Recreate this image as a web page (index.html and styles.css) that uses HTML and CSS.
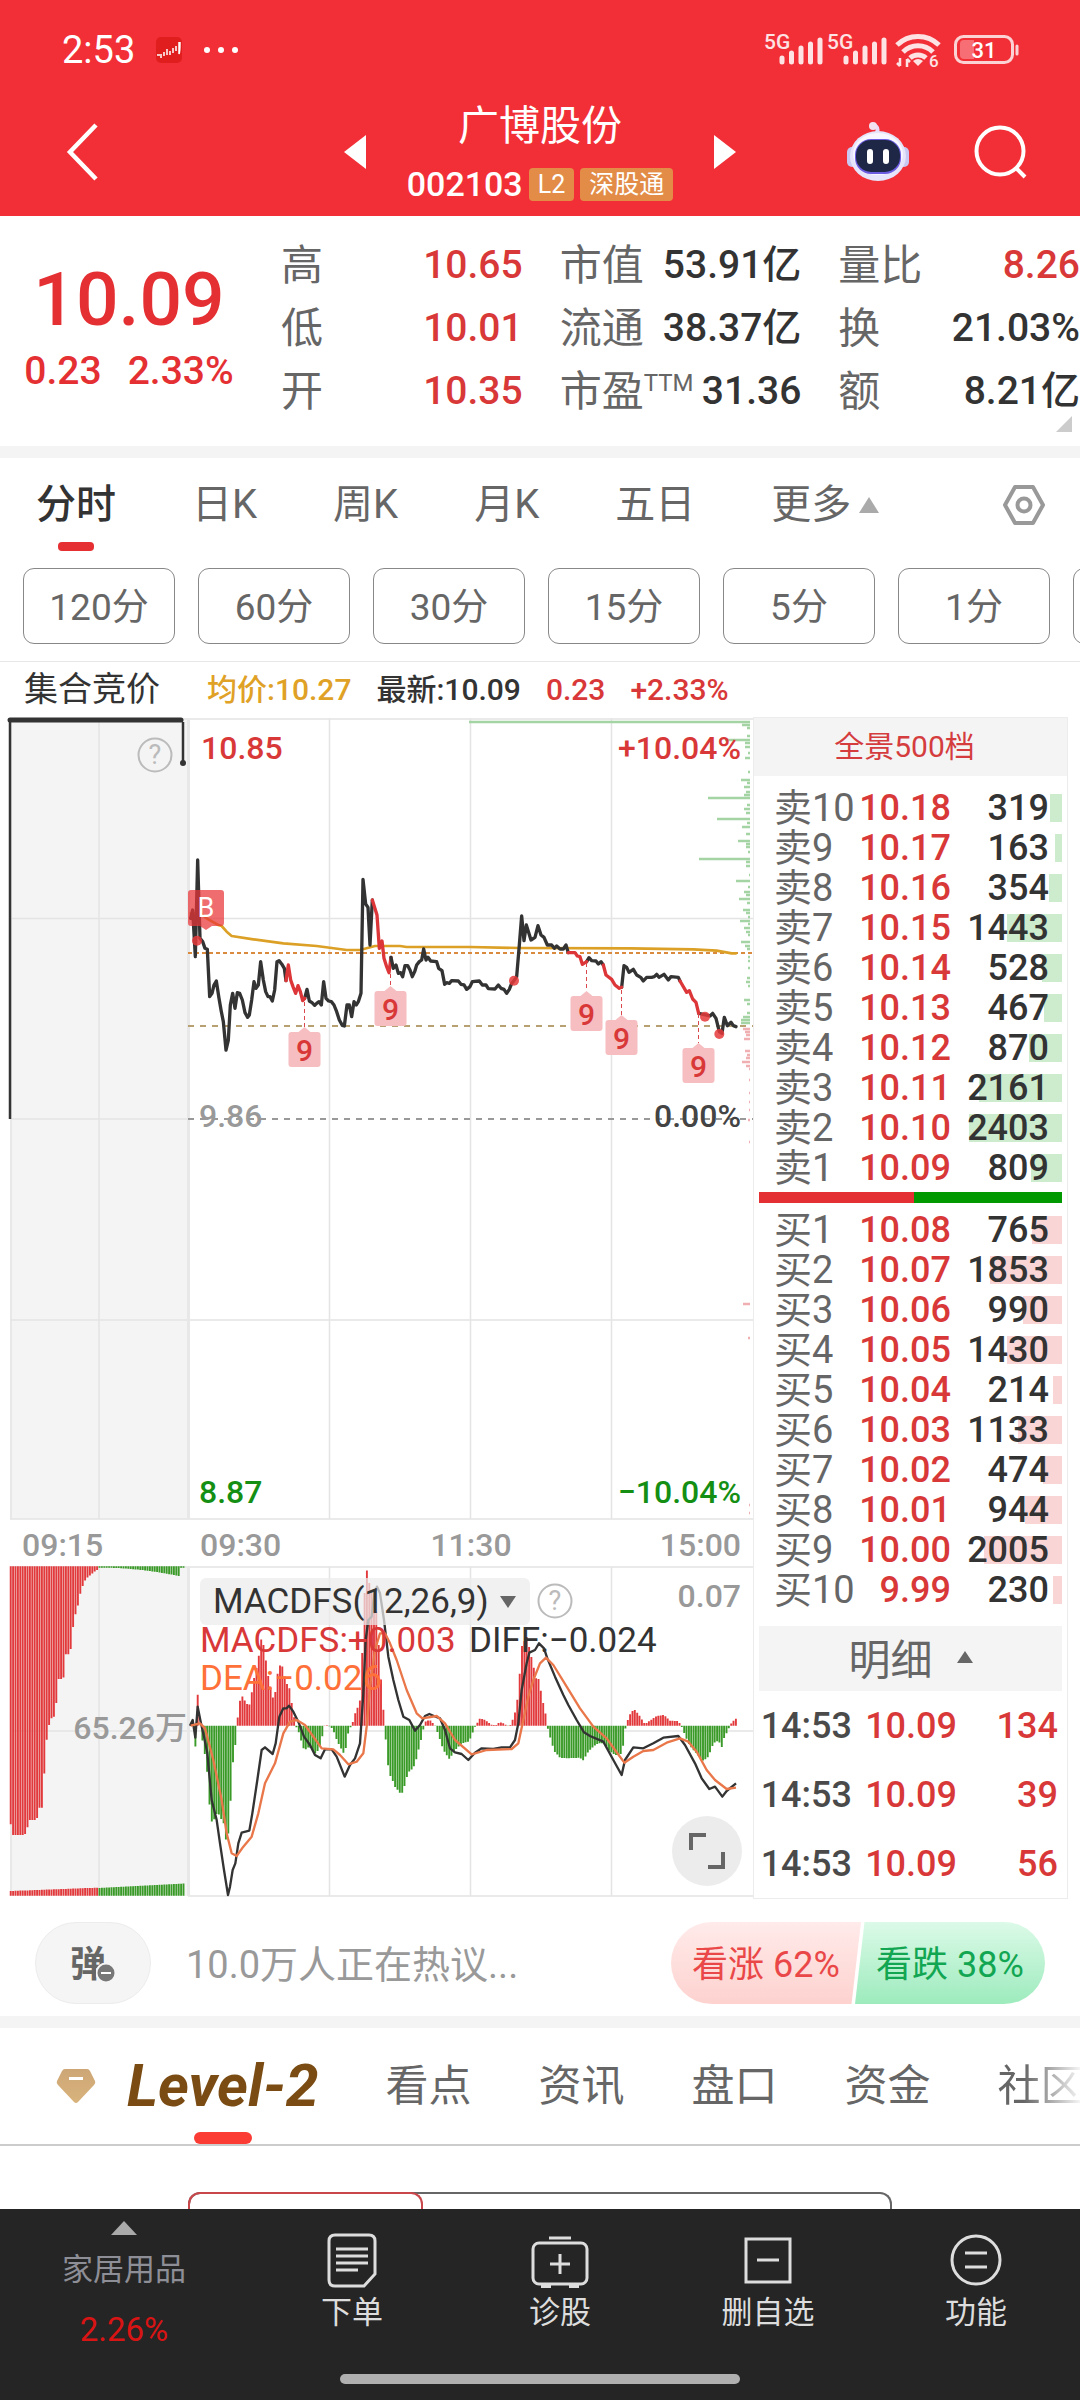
FILE: index.html
```html
<!DOCTYPE html>
<html lang="zh-CN">
<head>
    <title>广博股份 002103</title>

    <meta charset="utf-8"/>
    <meta name="viewport" content="width=device-width, initial-scale=1"/>

    <link rel="stylesheet" href="styles.css">
    <script src="chart.js" defer></script>
</head>
<body>

<header class="top">
    <div class="status">
        <span class="clock num">2:53</span>
        <svg class="app-dot" width="26" height="26" viewBox="0 0 26 26">
            <rect width="26" height="26" rx="5" fill="#e01e1e"/>
            <path d="M1 18h3M5 17v4M8 15v4M11 18v-6M14 14v4M17 16v-5M20 14V9M23 5v12q1-2 1-12" fill="none" stroke="#fff" stroke-width="1.500"/>
        </svg>
        <svg width="36" height="8" viewBox="0 0 36 8" fill="#fff">
            <circle cx="4" cy="4" r="3"/><circle cx="18" cy="4" r="3"/><circle cx="32" cy="4" r="3"/>
        </svg>
        <div class="status-right">
            <svg width="260" height="48" viewBox="760 26 260 48">
                <g fill="#fde3e4">
                    <text class="num" x="764" y="49" font-size="21">5G</text>
                    <text class="num" x="827" y="49" font-size="21">5G</text>
                </g>
                <path d="M782 62v-4M791.500 62v-9M801 62v-14M810.500 62v-18M820 62v-22M846 62v-4M855.500 62v-9M865 62v-14M874.500 62v-18M884 62v-22" stroke="#fde3e4" stroke-width="5" stroke-linecap="round"/>
                <g fill="none" stroke="#fde3e4" stroke-width="5">
                    <path d="M897 45a30 30 0 0 1 42 0"/>
                    <path d="M903 52a21 21 0 0 1 30 0"/>
                    <path d="M910 58a12 12 0 0 1 16 0"/>
                </g>
                <path d="M918 66l-5-5q5-4 10 0z" fill="#fde3e4"/>
                <path d="M900 58v8M900 66l-3-3M907 67v-8M907 59l3 3" stroke="#fde3e4" stroke-width="2.500" fill="none"/>
                <text class="num" x="929" y="67" font-size="17" fill="#fde3e4">6</text>
                <rect x="955.500" y="36.500" width="57" height="26" rx="8" fill="none" stroke="#fbd3d5" stroke-width="3"/>
                <path d="M960 44q0-4 4-4h10v19h-10q-4 0-4-4z" fill="#f76f74"/>
                <path d="M1017 46v8" stroke="#fbd3d5" stroke-width="3" stroke-linecap="round"/>
                <text class="num" x="984" y="58" font-size="22" fill="#fff" text-anchor="middle">31</text>
            </svg>
        </div>
    </div>

    <div class="titlebar">
        <button class="icon-btn back" aria-label="返回">
            <svg width="34" height="60" viewBox="0 0 34 60"><path d="M30 3L4 30l26 27" fill="none" stroke="#fff" stroke-width="4.500"/></svg>
        </button>
        <div class="stock">
            <button class="icon-btn" aria-label="上一只">
                <svg width="22" height="34" viewBox="0 0 22 34"><path d="M22 0v34L0 17z" fill="#fff"/></svg>
            </button>
            <div class="stock-name">
                <h1>广博股份</h1>
                <div class="stock-code">
                    <span class="num">002103</span>
                    <span class="tag">L2</span>
                    <span class="tag">深股通</span>
                </div>
            </div>
            <button class="icon-btn" aria-label="下一只">
                <svg width="22" height="34" viewBox="0 0 22 34"><path d="M0 0v34L22 17z" fill="#fff"/></svg>
            </button>
        </div>
        <div class="top-tools">
            <button class="icon-btn" aria-label="智能助手">
                <svg width="64" height="62" viewBox="0 0 64 62">
                    <path d="M31 12q2-6-3-8" fill="none" stroke="#e8dcf6" stroke-width="4"/>
                    <circle cx="27" cy="5" r="4" fill="#f3e3f0"/>
                    <rect x="1" y="26" width="10" height="20" rx="5" fill="#c9c8f2"/>
                    <rect x="53" y="26" width="10" height="20" rx="5" fill="#c9c8f2"/>
                    <ellipse cx="32" cy="35" rx="28" ry="25" fill="#e6e4fb"/>
                    <ellipse cx="32" cy="33" rx="25" ry="21" fill="#f8f7ff"/>
                    <rect x="9" y="18" width="46" height="35" rx="16" fill="#6a5be0"/>
                    <rect x="10" y="19" width="44" height="32" rx="15" fill="#1e2846"/>
                    <path d="M24 31v9M40 31v9" stroke="#fff" stroke-width="6" stroke-linecap="round"/>
                </svg>
            </button>
            <button class="icon-btn" aria-label="搜索">
                <svg width="54" height="54" viewBox="0 0 54 54"><g fill="none" stroke="#fff" stroke-width="4"><circle cx="26" cy="26" r="23.500"/><path d="M42 43l9 9"/></g></svg>
            </button>
        </div>
    </div>
</header>

<section class="quote">
    <div class="last">
        <strong class="last-price num">10.09</strong>
        <span class="last-change num"><span>0.23</span><span>2.33%</span></span>
    </div>
    <dl class="facts">
        <div><dt>高</dt><dd class="num up">10.65</dd></div>
        <div><dt>低</dt><dd class="num up">10.01</dd></div>
        <div><dt>开</dt><dd class="num up">10.35</dd></div>
    </dl>
    <dl class="facts">
        <div><dt>市值</dt><dd class="num">53.91亿</dd></div>
        <div><dt>流通</dt><dd class="num">38.37亿</dd></div>
        <div><dt>市盈<sup>TTM</sup></dt><dd class="num">31.36</dd></div>
    </dl>
    <dl class="facts">
        <div><dt>量比</dt><dd class="num up">8.26</dd></div>
        <div><dt>换</dt><dd class="num">21.03%</dd></div>
        <div><dt>额</dt><dd class="num">8.21亿</dd></div>
    </dl>
    <svg class="corner" width="16" height="16" viewBox="0 0 16 16"><path d="M16 0v16H0z" fill="#ccc"/></svg>
</section>

<nav class="periods">
    <a class="period active" href="#">分时</a>
    <a class="period" href="#">日K</a>
    <a class="period" href="#">周K</a>
    <a class="period" href="#">月K</a>
    <a class="period" href="#">五日</a>
    <a class="period more" href="#">更多<svg width="20" height="16" viewBox="0 0 20 16"><path d="M10 0l10 16H0z" fill="#aaa"/></svg></a>
    <button class="icon-btn settings" aria-label="设置">
        <svg width="42" height="42" viewBox="0 0 42 42"><g fill="none" stroke="#999" stroke-width="4"><path d="M12 3h18l10 18-10 18H12L2 21z" stroke-linejoin="round"/><circle cx="21" cy="21" r="6.500"/></g></svg>
    </button>
</nav>

<div class="minutes">
    <button>120分</button>
    <button>60分</button>
    <button>30分</button>
    <button>15分</button>
    <button>5分</button>
    <button>1分</button>
    <button aria-label="更多周期"></button>
</div>

<div class="summary">
    <span class="auction">集合竞价</span>
    <span class="avg num">均价:10.27</span>
    <span class="num">最新:10.09</span>
    <span class="num up">0.23</span>
    <span class="num up">+2.33%</span>
</div>

<main class="board">
    <div class="chart">
        <svg class="chart-svg" viewBox="0 717 753 1183">
            <!-- grid -->
            <path d="M10 718h178v801H10zM10 1567h178v329H10z" fill="#f4f4f4"/>
            <path d="M10 719H753M10 918.500H753M10 1119H188M10 1320H753M10 1519H753M10 1567H753M10 1731H753M188 1896H753M11 718V1519M99 718V1519M99 1567V1896M11 1567V1896M329.500 718V1519M470.500 718V1519M611.500 718V1519M329.500 1567V1896M470.500 1567V1896M611.500 1567V1896" class="grid"/>
            <path d="M188.500 718V1519M188.500 1567V1896" stroke="#e8e8e8" stroke-width="3"/>
            <path d="M188 1119H753" stroke="#999" stroke-width="2" stroke-dasharray="6 6"/>
            <path d="M188 953H753" stroke="#d98a3c" stroke-width="2" stroke-dasharray="4 3"/>
            <path d="M188 1026H753" stroke="#b7a173" stroke-width="2" stroke-dasharray="6 6"/>

            <!-- call auction -->
            <path d="M10 1119V720H181M183 722V762" class="price-line" stroke-width="2.500"/>
            <path d="M10 720H181" stroke="#333" stroke-width="5" stroke-linecap="round"/>
            <circle cx="183" cy="763" r="3" fill="#333"/>
            <g class="help"><circle cx="155" cy="755" r="16.500"/><text class="num" x="155" y="764">?</text></g>

            <!-- volume by price, filled by chart.js -->
            <path id="profile-up" stroke="#a4d3a4" stroke-width="2.500"/>
            <path id="profile-down" stroke="#f0b0b2" stroke-width="2.500"/>

            <!-- price and average, three units to the pixel -->
            <g transform="translate(0 700) scale(.33333)" fill="none" stroke-linejoin="round" stroke-linecap="round">
                <path class="avg-line" d="M572 640L600 640 625 658 655 675 665 678 680 695 695 708 760 718 850 730 950 738 1040 750 1080 750 1125 738 1200 738 1220 741 1410 741 1560 744 1890 745 2080 748 2150 752 2195 760 2208 760"/>
                <path class="price-line" d="M572 655L578 630 586 770 593 480 600 715 608 725 615 745 622 748 629 890 636 880 642 855 649 843 657 895 664 935 670 965 678 1050 685 1020 691 915 698 880 705 925 712 878 719 880 727 900 735 938 743 952 748 945 755 900 762 845 768 865 775 855 782 785 790 840 797 875 804 890 810 890 817 903 824 870 831 785 837 782 845 792 853 805 858 842M914 895L921 868 928 903 936 908 944 916 950 910 957 905 964 915 971 845 978 895 986 903 994 905 1002 915 1010 935 1018 960 1027 976 1033 978 1041 915 1048 915 1055 950 1062 905 1069 915 1075 905 1083 880 1089 538 1097 612 1104 622 1110 735 1117 600"/>
                <path class="price-line red" d="M858 842L865 795 872 840 879 860 887 880 894 857 901 875 908 902 914 895M1117 600L1131 645 1138 745 1146 723 1152 775 1160 800 1167 818 1173 772"/>
                <g transform="translate(1020 0)">
                    <path class="price-line" d="M153 772L160 805 168 795 175 820 182 818 188 830 195 797 203 797 210 810 217 830 224 815 230 795 238 785 245 780 251 747 258 780 264 772 272 783 290 785 296 805 306 812 314 853 320 848 328 850 335 842 355 843 363 853 372 855 380 868 390 860 397 845 418 843 427 855 438 855 445 866 465 867 475 855 483 865 492 868 500 880 508 868 515 850 522 842 530 830 538 735 545 648 552 722 559 675 573 720 585 712 594 677 603 705 612 712 622 735 635 735 643 745 650 738 660 747 670 747 678 735 685 758M740 785L747 773 755 782 768 783 775 792 783 785 790 795M845 862L852 797 860 802 867 817 880 808 890 825 902 832 910 843 920 832 935 832 943 830 950 823 957 832 972 823 985 840 993 830 1015 832 1020 843M1076 940L1110 948 1118 940 1128 955 1138 995 1146 1000 1153 952 1162 977 1173 967 1180 977 1188 980"/>
                    <path class="price-line red" d="M685 758L705 758 712 768 720 770 727 793 740 785M790 795L798 825 815 838 825 855 838 865 845 862M1020 843L1040 877 1048 872 1058 897 1068 907 1076 940"/>
                </g>
                <g fill="#e53a3c" fill-opacity=".85">
                    <circle cx="591" cy="722" r="15"/><circle cx="1542" cy="842" r="15"/><circle cx="2115" cy="950" r="15"/><circle cx="2158" cy="1002" r="15"/>
                </g>
            </g>

            <!-- buy mark -->
            <path d="M191 890h30q3 0 3 3v30q0 3-3 3h-9l-6 4-6-4h-9q-3 0-3-3v-30q0-3 3-3z" fill="#e93538" fill-opacity=".72"/>
            <text x="206" y="917" font-size="27" fill="#fff" text-anchor="middle">B</text>

            <!-- nine-turn marks -->
            <path d="M304.500 1002v25M390.500 974v12M586.500 963v28M621.500 990v25M698.500 1014v29" stroke="#d9484c" stroke-dasharray="4 3" stroke-width="1"/>
            <g id="nines"></g>

            <!-- price axis -->
            <g class="axis num">
                <text x="201" y="759" class="up">10.85</text>
                <text x="741" y="759" class="up end">+10.04%</text>
                <text x="199" y="1127" fill="#999">9.86</text>
                <text x="741" y="1127" fill="#444" class="end">0.00%</text>
                <text x="199" y="1503" class="down">8.87</text>
                <text x="741" y="1503" class="down end">−10.04%</text>
                <g fill="#999">
                    <text x="22" y="1556">09:15</text>
                    <text x="200" y="1556">09:30</text>
                    <text x="471" y="1556" class="mid">11:30</text>
                    <text x="741" y="1556" class="end">15:00</text>
                    <text x="741" y="1607" class="end">0.07</text>
                    <text x="187" y="1739" class="end">65.26万</text>
                </g>
            </g>

            <!-- auction volume and MACD columns, filled by chart.js -->
            <path id="col-red" stroke="#e2393c" stroke-width="1.900"/>
            <path id="col-green" stroke="#3a9a28" stroke-width="1.900"/>

            <g transform="translate(0 1460) scale(.33333)" fill="none" stroke-linejoin="round" stroke-width="7">
                <path stroke="#333" d="M570 797L578 780 586 833 593 740 602 785 612 830 622 880 635 1020 650 1080 660 1150 672 1230 684 1305 690 1280 698 1230 706 1210 715 1150 725 1118 748 1112 757 1060 772 960 785 870 795 862 818 882 827 850 838 770 850 745 860 745 867 737 880 755 897 790 912 830 930 855 945 885 962 895 975 868 995 868 1010 890 1034 950 1050 915 1065 895 1080 850 1090 700 1097 540 1105 480 1115 470 1123 400 1131 380 1140 400 1152 480 1165 590 1180 660 1195 720 1210 770 1228 780 1245 812 1260 795 1275 768 1288 762 1302 768 1320 775 1335 810 1350 865 1365 877 1385 882 1405 900 1425 878 1445 865 1480 867 1505 862 1530 862 1545 840 1555 790 1565 690 1580 610 1588 578 1605 570 1617 550 1632 565 1642 595 1665 650 1690 705 1705 735 1730 780 1752 817 1770 828 1810 845 1840 900 1865 945 1875 900 1900 862 1930 865 1960 850 1990 833 2035 828 2055 855 2085 910 2105 955 2128 987 2145 980 2167 1010 2180 993 2208 970"/>
                <path stroke="#e9774a" d="M572 797L600 790 615 805 640 900 665 1020 680 1120 695 1180 710 1188 730 1160 755 1130 775 1060 795 970 825 910 850 820 870 785 890 780 915 795 965 865 1000 868 1020 885 1045 913 1070 905 1090 880 1100 800 1110 680 1125 570 1140 520 1155 520 1170 550 1190 600 1220 690 1250 760 1267 775 1310 768 1335 790 1365 840 1415 883 1460 870 1535 867 1555 850 1570 780 1585 710 1600 660 1620 610 1638 593 1660 615 1700 680 1740 745 1780 800 1820 835 1845 870 1873 908 1900 890 1930 873 1960 870 2000 848 2040 835 2065 845 2090 875 2120 930 2145 960 2180 987 2208 983"/>
            </g>
            <g class="macd">
                <text x="200" y="1652" class="up">MACDFS:+0.003</text>
                <text x="469" y="1652" fill="#333">DIFF:−0.024</text>
                <text x="200" y="1690" fill="#ff7139">DEA:−0.026</text>
            </g>
            <g class="help"><circle cx="555" cy="1601" r="16.500"/><text class="num" x="555" y="1610">?</text></g>
        </svg>
        <button class="indicator">MACDFS(12,26,9)<svg width="16" height="12" viewBox="0 0 16 12"><path d="M0 0h16L8 12z" fill="#666"/></svg></button>
        <button class="expand" aria-label="全屏">
            <svg width="38" height="38" viewBox="0 0 38 38"><path d="M3 18V3h15M35 20v15H20" fill="none" stroke="#666" stroke-width="4"/></svg>
        </button>
    </div>

    <aside class="book">
        <a class="book-head" href="#">全景500档</a>
        <table class="levels sell">
            <tr><th>卖10</th><td>10.18</td><td><i style="width:11%"></i><b>319</b></td></tr>
            <tr><th>卖9</th><td>10.17</td><td><i style="width:6%"></i><b>163</b></td></tr>
            <tr><th>卖8</th><td>10.16</td><td><i style="width:12%"></i><b>354</b></td></tr>
            <tr><th>卖7</th><td>10.15</td><td><i style="width:50%"></i><b>1443</b></td></tr>
            <tr><th>卖6</th><td>10.14</td><td><i style="width:18%"></i><b>528</b></td></tr>
            <tr><th>卖5</th><td>10.13</td><td><i style="width:16%"></i><b>467</b></td></tr>
            <tr><th>卖4</th><td>10.12</td><td><i style="width:30%"></i><b>870</b></td></tr>
            <tr><th>卖3</th><td>10.11</td><td><i style="width:75%"></i><b>2161</b></td></tr>
            <tr><th>卖2</th><td>10.10</td><td><i style="width:84%"></i><b>2403</b></td></tr>
            <tr><th>卖1</th><td>10.09</td><td><i style="width:28%"></i><b>809</b></td></tr>
        </table>
        <div class="ratio"><span style="width:51%"></span></div>
        <table class="levels buy">
            <tr><th>买1</th><td>10.08</td><td><i style="width:27%"></i><b>765</b></td></tr>
            <tr><th>买2</th><td>10.07</td><td><i style="width:65%"></i><b>1853</b></td></tr>
            <tr><th>买3</th><td>10.06</td><td><i style="width:35%"></i><b>990</b></td></tr>
            <tr><th>买4</th><td>10.05</td><td><i style="width:50%"></i><b>1430</b></td></tr>
            <tr><th>买5</th><td>10.04</td><td><i style="width:8%"></i><b>214</b></td></tr>
            <tr><th>买6</th><td>10.03</td><td><i style="width:40%"></i><b>1133</b></td></tr>
            <tr><th>买7</th><td>10.02</td><td><i style="width:17%"></i><b>474</b></td></tr>
            <tr><th>买8</th><td>10.01</td><td><i style="width:33%"></i><b>944</b></td></tr>
            <tr><th>买9</th><td>10.00</td><td><i style="width:70%"></i><b>2005</b></td></tr>
            <tr><th>买10</th><td>9.99</td><td><i style="width:8%"></i><b>230</b></td></tr>
        </table>
        <button class="ticks-head">明细<svg width="16" height="12" viewBox="0 0 16 12"><path d="M0 12h16L8 0z" fill="#666"/></svg></button>
        <table class="ticks">
            <tr><th>14:53</th><td>10.09</td><td>134</td></tr>
            <tr><th>14:53</th><td>10.09</td><td>39</td></tr>
            <tr><th>14:53</th><td>10.09</td><td>56</td></tr>
        </table>
    </aside>
</main>

<section class="talk">
    <button class="danmu" aria-label="弹幕">弹<svg width="20" height="20" viewBox="0 0 20 20"><circle cx="10" cy="10" r="9.500" fill="#777" stroke="#f5f5f5" stroke-width="2"/><path d="M5 10h10" stroke="#fff" stroke-width="2"/></svg></button>
    <a class="talk-text" href="#">10.0万人正在热议...</a>
    <div class="vote">
        <button class="vote-up">看涨 62%</button>
        <button class="vote-down">看跌 38%</button>
    </div>
</section>

<nav class="sections">
    <a class="level2" href="#">
        <svg width="40" height="36" viewBox="0 0 40 36">
            <defs><linearGradient id="gem" x2="0" y2="1"><stop stop-color="#cda676"/><stop offset="1" stop-color="#d9b37c"/></linearGradient></defs>
            <path d="M9 1h22q2 0 3 2l5 10q1 2-1 4L22 34q-2 2-4 0L2 17q-2-2-1-4L6 3q1-2 3-2z" fill="url(#gem)"/>
            <path d="M13 10.500h14" stroke="#fff" stroke-width="3"/>
        </svg>
        <span>Level-2</span>
    </a>
    <a href="#">看点</a>
    <a href="#">资讯</a>
    <a href="#">盘口</a>
    <a href="#">资金</a>
    <a href="#">社区</a>
</nav>

<section class="panel">
    <div class="switch"><button class="switch-on" aria-label="Level-2"></button></div>
</section>

<footer class="bottom">
    <div class="actions">
        <a class="sector" href="#">
            <svg width="26" height="14" viewBox="0 0 26 14"><path d="M0 14h26L13 0z" fill="#aaa"/></svg>
            <span>家居用品</span>
            <span class="sector-change">2.26%</span>
        </a>
        <button class="action">
            <svg width="60" height="60" viewBox="0 0 60 60" fill="none" stroke="#ddd" stroke-width="3"><path d="M13 5h34q6 0 6 6v33L42 56H13q-6 0-6-6V11q0-6 6-6z"/><path d="M14 19h32M14 26h32M14 33h32M14 40h22"/></svg>
            下单
        </button>
        <button class="action">
            <svg width="60" height="60" viewBox="0 0 60 60" fill="none" stroke="#ddd" stroke-width="3"><rect x="3" y="13" width="54" height="41" rx="6"/><path d="M19 8h22M30 24v20M20 34h20"/><path d="M11 56h10M39 56h10" stroke-width="4"/></svg>
            诊股
        </button>
        <button class="action">
            <svg width="60" height="60" viewBox="0 0 60 60" fill="none" stroke="#ddd" stroke-width="3"><rect x="8" y="9" width="44" height="43"/><path d="M19 30h22"/></svg>
            删自选
        </button>
        <button class="action">
            <svg width="60" height="60" viewBox="0 0 60 60" fill="none" stroke="#ddd" stroke-width="3"><circle cx="30" cy="30" r="24"/><path d="M19 23h22M19 37h22"/></svg>
            功能
        </button>
    </div>
    <div class="home-bar"></div>
</footer>

</body>
</html>
```
FILE: styles.css
```css
* {
    box-sizing: border-box;
}

body {
    margin: 0;
    min-height: 100vh;
    display: flex;
    flex-direction: column;
    background: #fff;
    color: #333;
    font-family: Roboto, "Noto Sans CJK SC", sans-serif;
    overflow-x: hidden;
}

button {
    margin: 0;
    padding: 0;
    border: 0;
    background: none;
    color: inherit;
    font: inherit;
    cursor: pointer;
}

a {
    color: inherit;
    text-decoration: none;
}

svg {
    display: block;
}

h1, dl, dd {
    margin: 0;
}

.num {
    font-weight: 500;
}

.up {
    color: #d93838;
    fill: #d93838;
}

.down {
    fill: #148f14;
}

.icon-btn {
    display: flex;
}

/* header */
.top {
    background: #f22f37;
    color: #fff;
}

.status {
    display: flex;
    align-items: center;
    gap: 21px;
    height: 92px;
    padding: 8px 60px 0 62px;
}

.clock {
    font-size: 38px;
    font-weight: 400;
    line-height: 40px;
}

.status-right {
    margin-left: auto;
}

.titlebar {
    display: grid;
    grid-template-columns: 1fr auto 1fr;
    align-items: center;
    height: 124px;
    padding: 0 52px 4px 66px;
}

.stock {
    display: flex;
    align-items: center;
    justify-content: space-between;
    width: 392px;
    margin-right: 14px;
}

.stock-name {
    padding-top: 4px;
    text-align: center;
}

.stock-name h1 {
    font-size: 41px;
    font-weight: 400;
    line-height: 60px;
}

.stock-code {
    display: flex;
    align-items: center;
    gap: 6px;
    height: 56px;
    font-size: 34px;
}

.tag {
    padding: 0 9px;
    border-radius: 4px;
    background: #e28c48;
    font-size: 25px;
    line-height: 33px;
}

.top-tools {
    display: flex;
    align-items: center;
    justify-content: flex-end;
    gap: 64px;
}

/* quote */
.quote {
    position: relative;
    display: grid;
    grid-template-columns: 244px repeat(3, 1fr);
    gap: 37px;
    height: 242px;
    padding-top: 18px;
    border-bottom: 12px solid #f4f4f4;
}

.last {
    display: flex;
    flex-direction: column;
    align-items: center;
    padding: 18px 0 0 14px;
    color: #e53033;
}

.last-price {
    font-size: 75px;
    line-height: 94px;
}

.last-change {
    display: flex;
    gap: 26px;
    font-size: 39px;
    line-height: 50px;
}

.facts div {
    display: flex;
    justify-content: space-between;
    height: 63px;
    line-height: 63px;
    font-size: 42px;
    white-space: nowrap;
}

.facts dt {
    color: #666;
}

.facts sup {
    font-size: 24px;
    line-height: 24px;
}

.facts dd {
    font-size: 39px;
}

.corner {
    position: absolute;
    right: 8px;
    bottom: 14px;
}

/* period tabs */
.periods {
    display: flex;
    align-items: center;
    gap: 76px;
    height: 110px;
    padding: 0 35px 16px 36px;
    font-size: 40px;
    line-height: 60px;
    color: #666;
}

.period {
    position: relative;
    white-space: nowrap;
}

.period.active {
    color: #333;
    font-weight: 500;
}

.period.active::after {
    content: "";
    position: absolute;
    left: 50%;
    bottom: -16px;
    width: 36px;
    height: 9px;
    margin-left: -18px;
    border-radius: 4px;
    background: #e52f33;
}

.more {
    display: flex;
    align-items: center;
    gap: 8px;
}

.settings {
    margin-left: auto;
}

.minutes {
    display: flex;
    gap: 23px;
    padding: 0 0 17px 23px;
    border-bottom: 1px solid #e8e8e8;
    overflow: hidden;
}

.minutes button {
    flex: 0 0 152px;
    height: 76px;
    padding-bottom: 4px;
    border: 1px solid #888;
    border-radius: 11px;
    color: #666;
    font-size: 37px;
}

.summary {
    display: flex;
    align-items: center;
    gap: 25px;
    height: 55px;
    padding: 0 24px;
    font-size: 30px;
    line-height: 55px;
}

.auction {
    margin-right: 22px;
    font-size: 34px;
}

.avg {
    color: #dfa126;
}

/* chart */
.board {
    display: flex;
    align-items: flex-start;
    padding-right: 12px;
}

.chart {
    position: relative;
    flex: 1;
}

.chart-svg {
    width: 100%;
}

.grid {
    fill: none;
    stroke: #e4e4e4;
    stroke-width: 1.5;
}

.price-line {
    fill: none;
    stroke: #333;
    stroke-width: 10;
}

.price-line[stroke-width] {
    stroke-width: 2.5;
}

.price-line.red {
    stroke: #dd3639;
}

.avg-line {
    stroke: #dba025;
    stroke-width: 8;
}

.help circle {
    fill: none;
    stroke: #bbb;
    stroke-width: 2;
}

.help text {
    fill: #bbb;
    font-size: 27px;
    font-weight: 400;
    text-anchor: middle;
}

.axis {
    font-size: 32px;
}

.axis .end {
    text-anchor: end;
}

.axis .mid {
    text-anchor: middle;
}

.macd {
    font-size: 35px;
}

.nine {
    fill: #d93838;
    font-size: 30px;
    text-anchor: middle;
}

.indicator {
    position: absolute;
    left: 200px;
    top: 861px;
    display: flex;
    align-items: center;
    gap: 11px;
    height: 47px;
    padding: 0 14px 0 13px;
    border-radius: 6px;
    background: rgba(236, 236, 236, .72);
    font-size: 35px;
}

.expand {
    position: absolute;
    right: 11px;
    bottom: 14px;
    display: flex;
    align-items: center;
    justify-content: center;
    width: 70px;
    height: 70px;
    border-radius: 50%;
    background: #ececec;
}

/* order book */
.book {
    flex: 0 0 315px;
    border: 1px solid #ececec;
    padding: 0 5px;
}

.book-head {
    display: block;
    margin: 0 -5px 12px;
    padding-right: 12px;
    background: #f4f4f4;
    color: #d43c3e;
    font-size: 30px;
    line-height: 58px;
    text-align: center;
}

.book table {
    width: 100%;
    border-collapse: collapse;
    table-layout: fixed;
}

.book th,
.book td {
    padding: 0;
    font-weight: 400;
    text-align: right;
    white-space: nowrap;
}

.levels tr {
    height: 40px;
    line-height: 40px;
}

.book .levels th {
    width: 99px;
    padding-left: 15px;
    color: #666;
    font-size: 38px;
    text-align: left;
}

.book .levels td {
    position: relative;
    color: #d93838;
    font-size: 36px;
    font-weight: 500;
}

.levels td:nth-child(2) {
    width: 93px;
}

.book .levels td:last-child {
    padding-right: 13px;
    color: #333;
}

.levels i {
    position: absolute;
    right: 0;
    top: 6px;
    height: 28px;
    background: #cdebcd;
}

.levels.buy i {
    background: #fad5d6;
}

.levels b {
    position: relative;
    font-weight: 500;
}

.ratio {
    height: 11px;
    margin: 4px 0 7px;
    background: #009a00;
}

.ratio span {
    display: block;
    height: 100%;
    background: #e53033;
}

.ticks-head {
    display: flex;
    align-items: center;
    justify-content: center;
    gap: 24px;
    width: 100%;
    height: 65px;
    margin-top: 16px;
    padding-bottom: 4px;
    background: #f4f4f4;
    color: #666;
    font-size: 42px;
}

.ticks tr {
    height: 69px;
    font-size: 36px;
    color: #d93838;
}

.book .ticks th {
    width: 93px;
    color: #4a4a4a;
    font-weight: 500;
}

.book .ticks td {
    font-weight: 500;
}

.book .ticks td:last-child {
    padding-right: 4px;
}

/* discussion */
.talk {
    display: flex;
    align-items: center;
    height: 128px;
    padding: 10px 35px 0;
    border-bottom: 12px solid #f4f4f4;
}

.danmu {
    display: flex;
    align-items: center;
    justify-content: center;
    width: 116px;
    height: 82px;
    padding-bottom: 4px;
    border: 1px solid #ececec;
    border-radius: 41px;
    background: #f5f5f5;
    color: #666;
    font-size: 36px;
    font-weight: 700;
}

.danmu svg {
    margin: 24px 0 0 -10px;
}

.talk-text {
    margin-left: 35px;
    padding-bottom: 4px;
    color: #999;
    font-size: 38px;
}

.vote {
    display: flex;
    margin-left: auto;
    font-size: 36px;
}

.vote button {
    width: 190px;
    height: 82px;
    padding-bottom: 4px;
}

.vote-up {
    border-radius: 41px 0 0 41px;
    background: linear-gradient(#ffebea, #fdd2cf);
    clip-path: polygon(0 0, 100% 0, 95% 100%, 0 100%);
    color: #ea4848;
}

.vote-down {
    margin-left: -6px;
    border-radius: 0 41px 41px 0;
    background: linear-gradient(#dcfae8, #9debbd);
    clip-path: polygon(5% 0, 100% 0, 100% 100%, 0 100%);
    color: #12a653;
}

/* content tabs */
.sections {
    display: flex;
    align-items: center;
    gap: 67px;
    height: 118px;
    padding-left: 56px;
    border-bottom: 2px solid #ccc;
    color: #666;
    font-size: 43px;
    line-height: 60px;
    white-space: nowrap;
    overflow: hidden;
}

.sections a:last-child {
    background: linear-gradient(90deg, #666 30%, #fff 100%);
    -webkit-background-clip: text;
    background-clip: text;
    color: transparent;
}

.level2 {
    position: relative;
    display: flex;
    align-items: center;
    gap: 31px;
    height: 100%;
    color: #7a4c14;
    font-size: 59px;
    font-style: italic;
    font-weight: 700;
}

.level2::after {
    content: "";
    position: absolute;
    left: 138px;
    bottom: 0;
    width: 58px;
    height: 12px;
    border-radius: 6px;
    background: #fb3c35;
}

.panel {
    flex: 1;
    padding: 46px 188px 0;
    overflow: hidden;
}

.switch {
    height: 17px;
    border: 2px solid #666;
    border-bottom: 0;
    border-radius: 12px 12px 0 0;
}

.switch-on {
    display: block;
    width: 235px;
    height: 17px;
    margin: -2px;
    border: 2px solid #c9474a;
    border-bottom: 0;
    border-radius: 12px 12px 0 0;
}

/* bottom bar */
.bottom {
    position: sticky;
    bottom: 0;
    height: 191px;
    background: #252525;
    color: #ddd;
    font-size: 31px;
}

.actions {
    display: flex;
    height: 165px;
}

.sector {
    display: flex;
    flex: 0 0 248px;
    flex-direction: column;
    align-items: center;
    padding-top: 12px;
    color: #8e8e96;
    line-height: 60px;
}

.sector svg {
    margin-bottom: 5px;
}

.sector-change {
    color: #d91414;
    font-size: 33px;
}

.action {
    display: flex;
    flex: 1;
    flex-direction: column;
    align-items: center;
    padding-top: 21px;
    line-height: 46px;
}

.home-bar {
    width: 37%;
    height: 10px;
    margin: 0 auto;
    border-radius: 5px;
    background: #b0b0b0;
}
```
FILE: chart.js
```js
// volume by price: [y, left edge] in page pixels, right edge is fixed
var profileUp = [[722,469],[725,742],[728,747],[736,747],[740,725],[743,745],[747,745],[753,748],[758,745],[772,748],[780,741],[783,747],[787,744],[792,746],[795,744],[798,708],[805,747],[809,744],[813,746],[819,717],[823,747],[827,742],[834,746],[841,738],[844,746],[847,746],[852,748],[859,699],[862,746],[866,746],[875,749],[881,736],[887,748],[892,744],[895,746],[899,739],[903,747],[910,743],[913,746],[917,748],[921,740],[924,748],[928,744],[932,746],[935,748],[942,741],[946,745],[949,747],[957,748],[961,748],[968,748],[978,747],[982,746],[986,748],[1000,744],[1004,747],[1013,747],[1017,743],[1020,741],[1023,741]];
var profileDown = [[1029,743],[1032,745],[1035,746],[1039,744],[1051,745],[1055,747],[1058,746],[1062,742],[1066,746],[1069,749],[1080,749],[1093,749],[1102,749],[1110,749],[1120,748],[1142,749],[1304,743],[1338,748],[1505,749],[1513,749]];

// MACD column ends, x and y at three units to the pixel
var macd = [572,797,578,770,586,862,593,702,600,797,607,840,614,880,621,930,628,1030,635,1085,645,1075,652,1055,664,1078,671,1090,678,1140,685,1120,692,1020,699,905,706,855,712,780,719,725,726,708,733,720,747,740,754,705,761,660,775,600,782,537,789,545,796,590,803,640,810,675,817,713,824,712,831,650,838,618,845,612,852,640,859,672,866,672,873,715,880,760,887,797,900,825,907,860,914,870,928,860,936,870,944,880,950,878,964,850,971,797,978,795,992,800,1000,810,1006,830,1020,860,1034,885,1041,840,1048,800,1055,803,1062,768,1076,735,1083,708,1090,460,1097,345,1104,320,1111,410,1118,390,1125,420,1132,480,1139,612,1146,692,1153,790,1160,872,1167,945,1175,950,1182,978,1190,985,1197,998,1208,998,1217,965,1224,938,1238,925,1245,913,1252,885,1260,850,1267,825,1274,785,1290,780,1304,795,1312,815,1330,870,1348,897,1356,885,1370,865,1385,850,1405,845,1414,830,1421,808,1428,795,1440,775,1455,780,1475,795,1490,795,1498,786,1510,790,1525,799,1533,793,1542,767,1550,740,1558,655,1565,560,1580,530,1587,560,1594,590,1601,622,1608,655,1615,655,1622,690,1629,727,1636,757,1642,800,1650,830,1657,855,1664,875,1680,893,1700,895,1740,893,1748,903,1765,875,1780,860,1795,850,1815,850,1825,870,1845,885,1860,885,1867,875,1875,810,1882,783,1890,763,1902,747,1915,762,1935,793,1948,783,1970,768,1992,765,2010,782,2035,783,2045,800,2055,825,2065,850,2080,870,2110,903,2125,890,2140,850,2155,842,2166,862,2172,835,2185,808,2195,787,2210,774];

// unmatched call auction volume
var auction = [30,1080,37,1125,74,1125,82,1103,89,1080,110,1080,117,1043,128,1043,135,893,142,818,150,783,157,770,167,770,172,657,190,657,196,583,208,583,213,563,220,493,227,460,234,435,241,400,249,375,257,357,265,350,272,345,280,337,287,333,294,328];

function valueAt(points, x) {
    for (var i = 2; i < points.length; i += 2) {
        if (x <= points[i]) {
            var t = (x - points[i - 2]) / (points[i] - points[i - 2]);
            return points[i - 1] + t * (points[i + 1] - points[i - 1]);
        }
    }
    return points[points.length - 1];
}

function column(x, from, to) {
    return "M" + (x / 3).toFixed(1) + " " + (1460 + from / 3).toFixed(1) + "V" + (1460 + to / 3).toFixed(1);
}

function profile(rows) {
    return rows.map(function (r) {
        return "M" + r[1] + " " + r[0] + "H750";
    }).join("");
}

var red = "", green = "", x, y;

for (x = 572; x <= 2210; x += 7.05) {
    y = valueAt(macd, x);
    if (y < 797) red += column(x, 797, y);
    else green += column(x, 797, y);
}

for (x = 32; x < 554; x += 7.2) {
    if (x < 297) {
        red += column(x, 319, valueAt(auction, x));
        red += column(x, 1307, 1293 - (x - 32) / 26);
    } else {
        green += column(x, 319, x < 540 ? 323 + (x - 300) * (x - 300) / 2200 : 323);
        green += column(x, 1307, 1284 - (x - 297) / 19);
    }
}

document.getElementById("col-red").setAttribute("d", red);
document.getElementById("col-green").setAttribute("d", green);
document.getElementById("profile-up").setAttribute("d", profile(profileUp));
document.getElementById("profile-down").setAttribute("d", profile(profileDown));

// nine-turn marks: [centre, tip]
document.getElementById("nines").innerHTML = [[304.5,1027],[390.5,986],[586.5,991],[621.5,1015],[698.5,1043]].map(function (m) {
    return '<path d="M' + m[0] + ' ' + m[1] + 'l6 5h7q3 0 3 3v29q0 3-3 3h-26q-3 0-3-3v-29q0-3 3-3h7z" fill="#f6bec0"/>' +
        '<text class="nine num" x="' + m[0] + '" y="' + (m[1] + 34) + '">9</text>';
}).join("");
```
